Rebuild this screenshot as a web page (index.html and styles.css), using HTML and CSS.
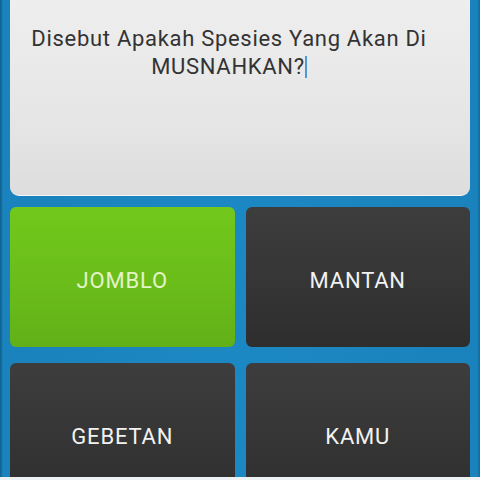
FILE: index.html
```html
<!DOCTYPE html>
<html lang="en">
<head>
    <meta charset="UTF-8">
    <meta name="viewport" content="width=device-width, initial-scale=1.0">
    <title>Kuis</title>
    <link rel="stylesheet" href="styles.css">
</head>
<body>
    <div class="screen">
        <div class="question">
            <p>Disebut Apakah Spesies Yang Akan Di MUSNAHKAN?<span class="caret"></span></p>
        </div>
        <div class="answers">
            <div class="answer correct">JOMBLO</div>
            <div class="answer">MANTAN</div>
            <div class="answer">GEBETAN</div>
            <div class="answer">KAMU</div>
        </div>
    </div>
    <div class="footer"></div>
</body>
</html>
```

FILE: styles.css
```css
body {
    margin: 0;
    font-family: Roboto, "Noto Sans", sans-serif;
    background-color: #1c86c1;
}
.screen {
    height: 477px;
    overflow: hidden;
    padding: 0 10px;
    background: linear-gradient(90deg, #0d5f8c 0, #1a82bd 3px, #1c88c3 50%, #1a82bd 477px, #0f6a9a 480px);
}
.question {
    height: 196px;
    background: linear-gradient(180deg, #eeeeee 0%, #e6e6e6 60%, #dddddd 100%);
    border-radius: 0 0 9px 9px;
    border-bottom: 1px solid #f4f6f8;
    box-sizing: border-box;
    padding: 25px 36px 0 14px;
}
.question p {
    margin: 0;
    font-size: 22px;
    line-height: 28px;
    letter-spacing: 0.7px;
    color: #333;
    text-align: center;
}
.caret {
    display: inline-block;
    width: 2px;
    height: 22px;
    vertical-align: -4px;
    background-color: #4a9bd6;
}
.answers {
    display: grid;
    grid-template-columns: 1fr 1fr;
    grid-auto-rows: 140px;
    column-gap: 11px;
    row-gap: 16px;
    margin-top: 11px;
}
.answer {
    display: flex;
    align-items: center;
    justify-content: center;
    padding-top: 6px;
    box-sizing: border-box;
    border-radius: 6px;
    font-size: 22px;
    letter-spacing: 0.8px;
    color: #f2f2f2;
    background: linear-gradient(180deg, #3d3d3d 0%, #363636 50%, #2e2e2e 100%);
}
.answer.correct {
    color: #e4f3c8;
    background: linear-gradient(180deg, #72c81c 0%, #6bbe1a 50%, #62b018 100%);
}
.footer {
    height: 3px;
    background-color: #eef2f4;
}
```
